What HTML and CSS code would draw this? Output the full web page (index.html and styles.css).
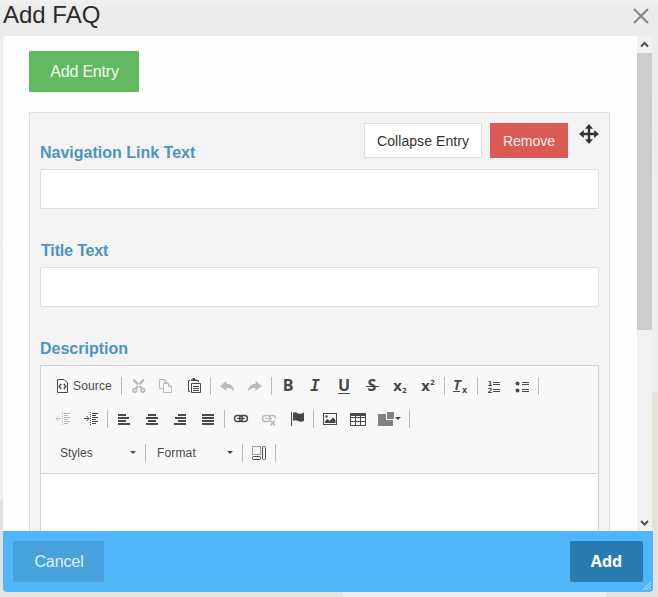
FILE: index.html
```html
<!DOCTYPE html>
<html lang="en">
<head>
<meta charset="utf-8">
<title>Add FAQ</title>
<link rel="stylesheet" href="styles.css">
</head>
<body>
<header class="titlebar">
  <h1>Add FAQ</h1>
  <svg class="close" viewBox="0 0 16 16"><path d="M1 1L15 15M15 1L1 15"/></svg>
</header>
<main class="dialog">
  <div class="viewport">
    <div class="content">
      <button class="btn add-entry">Add Entry</button>
      <section class="entry">
        <div class="actions">
          <button class="btn collapse">Collapse Entry</button>
          <button class="btn remove">Remove</button>
          <svg class="move" viewBox="0 0 20 20"><path class="bars" d="M10 3V17M3 10H17"/><path d="M10 0L14 4.800H6ZM10 20L14 15.200H6ZM0 10L4.800 6V14ZM20 10L15.200 6V14Z"/></svg>
        </div>
        <label class="label">Navigation Link Text</label>
        <input class="field" type="text">
        <label class="label title-label">Title Text</label>
        <input class="field" type="text">
        <label class="label">Description</label>
        <div class="editor">
          <div class="toolbar">
            <div class="row">
              <span class="tool source"><svg viewBox="0 0 16 16"><path class="line" d="M1.500 1.500H8L11.500 5V14.500H1.500Z"/><path class="link" d="M5.200 6L3.200 8.500L5.200 11M7.800 6L9.800 8.500L7.800 11"/></svg>Source</span>
              <i class="sep"></i>
              <span class="tool off"><svg viewBox="0 0 16 16"><path d="M3 1L5 1.500L13 10L11 11L3 3ZM14 1L12 1.500L5 10L7 11L14 3Z"/><circle class="thick" cx="4.8" cy="12.3" r="1.8"/><circle class="thick" cx="12.8" cy="12.3" r="1.8"/></svg></span>
              <span class="tool off"><svg viewBox="0 0 16 16"><path class="line" d="M5 10.500H1.500V1.500H6.500L9.500 4.500V5M6.500 1.500V4.500H9.500M5.500 5.500H10.500L13.500 8.500V14.500H5.500ZM10.500 5.500V8.500H13.500"/></svg></span>
              <span class="tool"><svg viewBox="0 0 16 16"><path class="line" d="M4 2.500H2.500V13.500H4M10 2.500H12.500V4M5.500 5.500H14.500V14.500H5.500ZM7 8.500H13M7 10.500H13M7 12.500H13"/><path d="M5 3V1.500H6.500V0H9V1.500H10.500V3Z"/></svg></span>
              <i class="sep"></i>
              <span class="tool off"><svg viewBox="0 0 16 16"><path d="M1 8L7.500 3V6C12 6 15 8.500 15 13.500C13 10.500 11 10 7.500 10V13Z"/></svg></span>
              <span class="tool off"><svg viewBox="0 0 16 16"><path d="M15 8L8.500 3V6C4 6 1 8.500 1 13.500C3 10.500 5 10 8.500 10V13Z"/></svg></span>
              <i class="sep"></i>
              <span class="tool glyph">B</span>
              <span class="tool glyph italic">I</span>
              <span class="tool glyph underline">U</span>
              <span class="tool glyph strike">S</span>
              <span class="tool"><svg viewBox="0 0 16 16"><text class="base" x="1" y="12.500">x</text><text class="mark" x="10" y="15">2</text></svg></span>
              <span class="tool"><svg viewBox="0 0 16 16"><text class="base" x="1" y="12.500">x</text><text class="mark" x="10" y="7">2</text></svg></span>
              <i class="sep"></i>
              <span class="tool"><svg viewBox="0 0 16 16"><text class="clear" x="0" y="11.500">T</text><path d="M0 13H7V14H0Z"/><text class="mark clear-x" x="9" y="15">x</text></svg></span>
              <i class="sep"></i>
              <span class="tool"><svg viewBox="0 0 16 16"><text class="num" x="1.500" y="8">1</text><text class="num" x="1.500" y="15">2</text><path class="line" d="M7 4.500H14M7 6.500H14M7 11.500H14M7 13.500H14"/></svg></span>
              <span class="tool"><svg viewBox="0 0 16 16"><circle cx="3.500" cy="5.500" r="2"/><circle cx="3.500" cy="12.500" r="2"/><path class="line" d="M8 4.500H15M8 6.500H15M8 11.500H15M8 13.500H15"/></svg></span>
              <i class="sep"></i>
            </div>
            <div class="row">
              <span class="tool off"><svg viewBox="0 0 16 16"><path class="line" d="M9 2.500H15M9 4.500H13M9 6.500H15M9 8.500H13M9 10.500H15M9 12.500H13M1 7.500H6M3.500 5L1 7.500L3.500 10"/><path class="line dots" d="M7.500 1V15"/></svg></span>
              <span class="tool"><svg viewBox="0 0 16 16"><path class="line" d="M9 2.500H15M9 4.500H13M9 6.500H15M9 8.500H13M9 10.500H15M9 12.500H13M1 7.500H6M3.500 5L6 7.500L3.500 10"/><path class="line dots" d="M7.500 1V15"/></svg></span>
              <i class="sep"></i>
              <span class="tool"><svg viewBox="0 0 16 16"><path d="M2 3H10V5H2ZM2 6H13V8H2ZM2 9H10V11H2ZM2 12H14V14H2Z"/></svg></span>
              <span class="tool"><svg viewBox="0 0 16 16"><path d="M4 3H12V5H4ZM2 6H14V8H2ZM4 9H12V11H4ZM2 12H14V14H2Z"/></svg></span>
              <span class="tool"><svg viewBox="0 0 16 16"><path d="M6 3H14V5H6ZM3 6H14V8H3ZM6 9H14V11H6ZM2 12H14V14H2Z"/></svg></span>
              <span class="tool"><svg viewBox="0 0 16 16"><path d="M2 3H14V5H2ZM2 6H14V8H2ZM2 9H14V11H2ZM2 12H14V14H2Z"/></svg></span>
              <i class="sep"></i>
              <span class="tool"><svg viewBox="0 0 16 16"><rect class="link" x="1.500" y="4.500" width="8" height="6" rx="3"/><rect class="link" x="6.500" y="4.500" width="8" height="6" rx="3"/><path class="line" d="M4 7.500H12"/></svg></span>
              <span class="tool off"><svg viewBox="0 0 16 16"><rect class="link" x="1.500" y="4.500" width="8" height="6" rx="3"/><path class="link" d="M8 4.500H11.500Q14.500 4.500 14.500 7.500"/><path class="line" d="M4 7.500H11"/><path class="thick" d="M9.500 9.500L14 14.500M14 9.500L9.500 14.500"/></svg></span>
              <span class="tool"><svg viewBox="0 0 16 16"><path d="M2 1H3V15H2ZM4 2Q6 .500 9 2.500Q12 3.500 15 1.500V10Q12 11.500 9 10Q6 8.500 4 10Z"/></svg></span>
              <i class="sep"></i>
              <span class="tool"><svg viewBox="0 0 16 16"><rect class="line" x="1.500" y="2.500" width="13" height="11"/><circle cx="4.500" cy="5.500" r="1.200"/><path d="M3 12V10L5.500 8L7.500 10L11 6.500L13.500 9V12Z"/></svg></span>
              <span class="tool"><svg viewBox="0 0 16 16"><path class="line" d="M.500 2.500H15.500V14.500H.500ZM1 6.500H15M1 10.500H15M5.500 5V14M10.500 5V14"/><path d="M1 2H15V5H1Z"/></svg></span>
              <span class="tool templates"><svg viewBox="0 0 16 16"><path class="mid" d="M0 3H8V9H15V15H0ZM9 1H16V8H9Z"/></svg><b class="caret"></b></span>
              <i class="sep"></i>
            </div>
            <div class="row last">
              <span class="combo styles">Styles<b class="caret"></b></span>
              <i class="sep"></i>
              <span class="combo format">Format<b class="caret"></b></span>
              <i class="sep"></i>
              <span class="tool"><svg viewBox="0 0 16 16"><rect class="line dots" x="1.500" y="1.500" width="8" height="8"/><rect class="line" x="1.500" y="11.500" width="8" height="3" rx="1"/><rect class="line" x="11.500" y="1.500" width="3" height="13" rx="1"/></svg></span>
              <i class="sep"></i>
            </div>
          </div>
          <div class="editable"></div>
        </div>
      </section>
    </div>
    <div class="scrollbar">
      <svg viewBox="0 0 15 17"><path d="M4 10.500L7.500 7L11 10.500"/></svg>
      <div class="thumb"></div>
      <svg class="down" viewBox="0 0 15 17"><path d="M4 7L7.500 10.500L11 7"/></svg>
    </div>
  </div>
  <footer class="footer">
    <button class="btn cancel">Cancel</button>
    <button class="btn add">Add</button>
    <svg class="grip" viewBox="0 0 8 8"><path d="M0 8L8 0M3 8L8 3M6 8L8 6"/></svg>
  </footer>
</main>
</body>
</html>
```
FILE: styles.css
```css
* { box-sizing: border-box; }
body {
  margin: 0;
  height: 597px;
  overflow: hidden;
  font-family: "Liberation Sans", Arial, sans-serif;
  background:
    linear-gradient(#e7e3dc, #e7e3dc) 0 592px / 343px 5px no-repeat,
    linear-gradient(#f1eeea, #f1eeea) 343px 592px / 263px 5px no-repeat,
    linear-gradient(#e6e1d9, #e6e1d9) 606px 592px / 52px 5px no-repeat,
    linear-gradient(#e6e1d9, #e6e1d9) 652px 392px / 6px 200px no-repeat,
    linear-gradient(#e4e2dd, #e4e2dd) 0 500px / 3px 92px no-repeat,
    linear-gradient(#f1f1f1 0, #ebebeb 12px, #ececec 36px, #f0f0f0 100%);
}
.titlebar { height: 36px; display: flex; justify-content: space-between; padding: 0 9px 0 3px; }
h1 { margin: 1px 0 0; font-size: 24px; line-height: 28px; font-weight: 400; color: #2b2b2b; }
.close { width: 16px; height: 16px; margin-top: 8px; fill: none; stroke: #858585; stroke-width: 2; }
.dialog { width: 650px; height: 556px; margin-left: 3px; }
.viewport { width: 649px; height: 495px; display: flex; overflow: hidden; background: #fefefe; border-radius: 4px 0 0 0; }
.content { width: 634px; padding: 15px 27px 0 26px; }
.btn { display: block; border: 0; padding: 0; margin: 0; font-family: inherit; text-align: center; flex: none; }
.add-entry { width: 110px; height: 41px; padding-left: 1px; font-size: 16px; letter-spacing: -.2px; color: #f4fff2; background: #62b960; border-radius: 1px; }
.entry { height: 600px; margin-top: 20px; padding: 11px 10px 0; background: #f3f3f3; border: 1px solid #dedede; }
.actions { height: 34px; display: flex; justify-content: flex-end; margin: -1px 0 -15px; }
.collapse { width: 118px; height: 35px; font-size: 14px; letter-spacing: .07px; color: #333; background: #fff; border: 1px solid #dedede; }
.remove { width: 78px; height: 35px; margin-left: 8px; font-size: 14px; color: #fff0ee; background: #dc5a56; }
.move { width: 20px; height: 20px; margin: 1px 0 0 11px; fill: #333; }
.bars { stroke: #333; stroke-width: 2.4; }
.label { display: block; height: 27px; font-size: 16px; line-height: 22px; font-weight: 700; color: #4b95bf; }
.title-label { padding-left: 1px; letter-spacing: -.15px; }
.field { display: block; width: 559px; height: 40px; margin: 0 0 31px; border: 1px solid #dedede; border-radius: 2px; background: #fff; }
.editor { width: 559px; border: 1px solid #d1d1d1; }
.toolbar { height: 108px; padding: 3px 8px 0; background: #f8f8f8; border-bottom: 1px solid #d1d1d1; }
.editable { height: 200px; background: #fff; }
.row { display: flex; align-items: center; height: 33px; color: #484848; font-size: 12px; }
.last { height: 35px; }
.tool { flex: none; width: 28px; height: 24px; display: flex; align-items: center; padding: 0 6px; }
.tool svg { width: 16px; height: 16px; flex: none; fill: #484848; overflow: visible; }
.tool .line, .tool .link { fill: none; stroke: #484848; stroke-width: 1; }
.tool .link { stroke-width: 1.4; }
.tool .thick { fill: none; stroke: #484848; stroke-width: 1.6; }
.tool .mid { fill: #828282; }
.tool .dots { stroke-dasharray: 1 1; }
.base { font: 700 14px "DejaVu Sans", sans-serif; }
.mark { font: 700 7px "DejaVu Sans", sans-serif; }
.clear { font: italic 700 14px "DejaVu Sans Mono", monospace; }
.clear-x { font-size: 8px; }
.num { font: 700 7px "DejaVu Sans", sans-serif; }
.off { opacity: .35; }
.source { width: 70px; gap: 1px; padding: 0 0 0 7px; letter-spacing: .15px; }
.sep { flex: none; width: 1px; height: 18px; margin: 0 2px; background: #bcbcbc; }
.glyph { justify-content: center; padding-bottom: 1px; font: 700 16px/18px "Open Sans", sans-serif; }
.italic { font-family: "DejaVu Sans Mono", monospace; font-style: italic; padding: 0 8px 0 6px; }
.underline { text-decoration: underline; text-decoration-thickness: 1px; text-underline-offset: 2px; }
.strike { position: relative; }
.strike::after { content: ""; position: absolute; left: 8px; top: 12px; width: 13px; height: 1px; background: #484848; }
.templates { width: 35px; }
.templates .caret { margin-left: 1px; }
.caret { flex: none; width: 0; height: 0; border: 3px solid transparent; border-top-color: #484848; border-bottom: 0; }
.combo { flex: none; display: flex; align-items: center; justify-content: space-between; height: 24px; letter-spacing: .15px; }
.styles { width: 94px; padding: 0 7px 0 11px; letter-spacing: 0; }
.format { width: 92px; padding: 0 7px 0 9px; }
.scrollbar { width: 15px; display: flex; flex-direction: column; background: #f1f1f1; }
.scrollbar svg { width: 15px; height: 17px; fill: none; stroke: #505050; stroke-width: 2; }
.thumb { height: 277px; background: #cdcdcd; }
.scrollbar .down { margin-top: auto; }
.footer { position: relative; height: 61px; padding: 10px; display: flex; justify-content: space-between; background: #50b6fa; border-radius: 0 0 4px 4px; }
.cancel { width: 91px; height: 41px; padding-left: 1px; font-size: 16px; letter-spacing: -.1px; color: #def5ff; background: #48a2de; }
.add { width: 73px; height: 41px; padding-bottom: 2px; font: 700 16px "Open Sans", sans-serif; color: #fff; background: #2b7bb3; border-radius: 2px; }
.grip { position: absolute; right: 2px; bottom: 2px; width: 8px; height: 8px; stroke: #bde3fb; stroke-width: 1; }
```
